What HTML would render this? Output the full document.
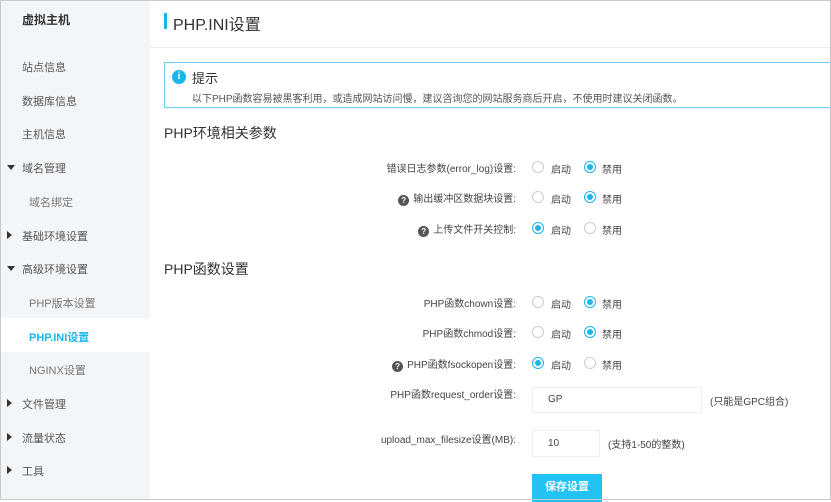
<!DOCTYPE html>
<html><head><meta charset="utf-8"><style>
*{margin:0;padding:0;box-sizing:border-box}
body{width:831px;height:500px;overflow:hidden;background:#fff;font-family:"Liberation Sans","Noto Sans CJK SC",sans-serif;color:#333;position:relative}
.frame{position:absolute;left:0;top:0;width:831px;height:500px;border:1px solid #c8c8c8;pointer-events:none;z-index:10}
.side{position:absolute;left:0;top:0;width:150px;height:500px;background:#f3f6f9}
.side div{position:absolute;font-size:11px;color:#555;white-space:nowrap}
.side .t{font-weight:bold;color:#333;font-size:12px}
.side .sub{left:29px;color:#777}
.side .act{color:#1ab6ea;font-weight:bold}
.arr{position:absolute;left:7px;width:0;height:0}
.ad{border-left:4px solid transparent;border-right:4px solid transparent;border-top:5px solid #333}
.ar{border-top:4px solid transparent;border-bottom:4px solid transparent;border-left:5px solid #333}
.hd{position:absolute;left:150px;top:0;right:0;height:48px;border-bottom:1px solid #e8edf3}
.bar{position:absolute;left:164px;top:13px;width:3px;height:16px;background:#1ab6ea}
.title{position:absolute;left:173px;top:11px;font-size:16px;color:#333}
.tip{position:absolute;left:164px;top:62px;width:680px;height:46px;border:1px solid #6dd0ee}
.tip .ic{position:absolute;left:7px;top:7px;width:14px;height:14px;border-radius:50%;background:#1ab6ea;color:#fff;font-size:10px;font-weight:bold;text-align:center;line-height:14px}
.tip .h{position:absolute;left:27px;top:5px;font-size:13px}
.tip .d{position:absolute;left:27px;top:27px;font-size:10px;color:#555;white-space:nowrap}
.sec{position:absolute;left:164px;font-size:14px;color:#333}
.lab{position:absolute;right:315px;font-size:10px;color:#444;white-space:nowrap;text-align:right}
.q{display:inline-block;width:11px;height:11px;border-radius:50%;background:#555;color:#fff;font-size:8px;font-weight:bold;text-align:center;line-height:11px;margin-right:4px;vertical-align:-1px}
.r{position:absolute;width:12px;height:12px;border-radius:50%;border:1px solid #ccc;background:#fff}
.r.on{border-color:#1ab6ea}
.r.on::after{content:"";position:absolute;left:2px;top:2px;width:6px;height:6px;border-radius:50%;background:#1ab6ea}
.rt{position:absolute;font-size:10px;color:#444}
.inp{position:absolute;border:1px solid #eee;font-size:10px;padding-left:15px;color:#444}
.btn{position:absolute;left:532px;top:474px;width:70px;height:28px;background:#22c2f2;color:#fff;font-size:11px;font-weight:bold;text-align:center;line-height:26px}
</style></head><body>
<div class="side">
<div class="t" style="left:22px;top:11px">虚拟主机</div>
<div style="left:22px;top:59px">站点信息</div>
<div style="left:22px;top:93px">数据库信息</div>
<div style="left:22px;top:126px">主机信息</div>
<span class="arr ad" style="top:165px"></span><div style="left:22px;top:160px">域名管理</div>
<div class="sub" style="top:194px">域名绑定</div>
<span class="arr ar" style="top:231px"></span><div style="left:22px;top:228px">基础环境设置</div>
<span class="arr ad" style="top:266px"></span><div style="left:22px;top:261px">高级环境设置</div>
<div class="sub" style="top:295px">PHP版本设置</div>
<div style="left:0;top:318px;width:150px;height:34px;background:#fff"></div>
<div class="sub act" style="top:329px">PHP.INI设置</div>
<div class="sub" style="top:362px">NGINX设置</div>
<span class="arr ar" style="top:399px"></span><div style="left:22px;top:396px">文件管理</div>
<span class="arr ar" style="top:433px"></span><div style="left:22px;top:430px">流量状态</div>
<span class="arr ar" style="top:466px"></span><div style="left:22px;top:463px">工具</div>
</div>
<div class="hd"></div>
<div class="bar"></div><div class="title">PHP.INI设置</div>
<div class="tip"><div class="ic">i</div><div class="h">提示</div><div class="d">以下PHP函数容易被黑客利用，或造成网站访问慢，建议咨询您的网站服务商后开启，不使用时建议关闭函数。</div></div>
<div class="sec" style="top:123px">PHP环境相关参数</div>
<div class="lab" style="top:160px">错误日志参数(error_log)设置:</div>
<div class="lab" style="top:190px"><span class="q">?</span>输出缓冲区数据块设置:</div>
<div class="lab" style="top:221px"><span class="q">?</span>上传文件开关控制:</div>
<div class="sec" style="top:259px">PHP函数设置</div>
<div class="lab" style="top:295px">PHP函数chown设置:</div>
<div class="lab" style="top:325px">PHP函数chmod设置:</div>
<div class="lab" style="top:356px"><span class="q">?</span>PHP函数fsockopen设置:</div>
<div class="lab" style="top:386px">PHP函数request_order设置:</div>
<div class="lab" style="top:431px">upload_max_filesize设置(MB):</div>

<div class="r" style="left:532px;top:161px"></div><div class="rt" style="left:551px;top:161px">启动</div>
<div class="r on" style="left:584px;top:161px"></div><div class="rt" style="left:602px;top:161px">禁用</div>
<div class="r" style="left:532px;top:191px"></div><div class="rt" style="left:551px;top:191px">启动</div>
<div class="r on" style="left:584px;top:191px"></div><div class="rt" style="left:602px;top:191px">禁用</div>
<div class="r on" style="left:532px;top:222px"></div><div class="rt" style="left:551px;top:222px">启动</div>
<div class="r" style="left:584px;top:222px"></div><div class="rt" style="left:602px;top:222px">禁用</div>
<div class="r" style="left:532px;top:296px"></div><div class="rt" style="left:551px;top:296px">启动</div>
<div class="r on" style="left:584px;top:296px"></div><div class="rt" style="left:602px;top:296px">禁用</div>
<div class="r" style="left:532px;top:326px"></div><div class="rt" style="left:551px;top:326px">启动</div>
<div class="r on" style="left:584px;top:326px"></div><div class="rt" style="left:602px;top:326px">禁用</div>
<div class="r on" style="left:532px;top:357px"></div><div class="rt" style="left:551px;top:357px">启动</div>
<div class="r" style="left:584px;top:357px"></div><div class="rt" style="left:602px;top:357px">禁用</div>

<div class="inp" style="left:532px;top:387px;width:170px;height:26px;line-height:24px">GP</div>
<div class="rt" style="left:710px;top:393px">(只能是GPC组合)</div>
<div class="inp" style="left:532px;top:430px;width:68px;height:27px;line-height:25px">10</div>
<div class="rt" style="left:608px;top:436px">(支持1-50的整数)</div>
<div class="btn">保存设置</div>
<div class="frame"></div>
</body></html>
